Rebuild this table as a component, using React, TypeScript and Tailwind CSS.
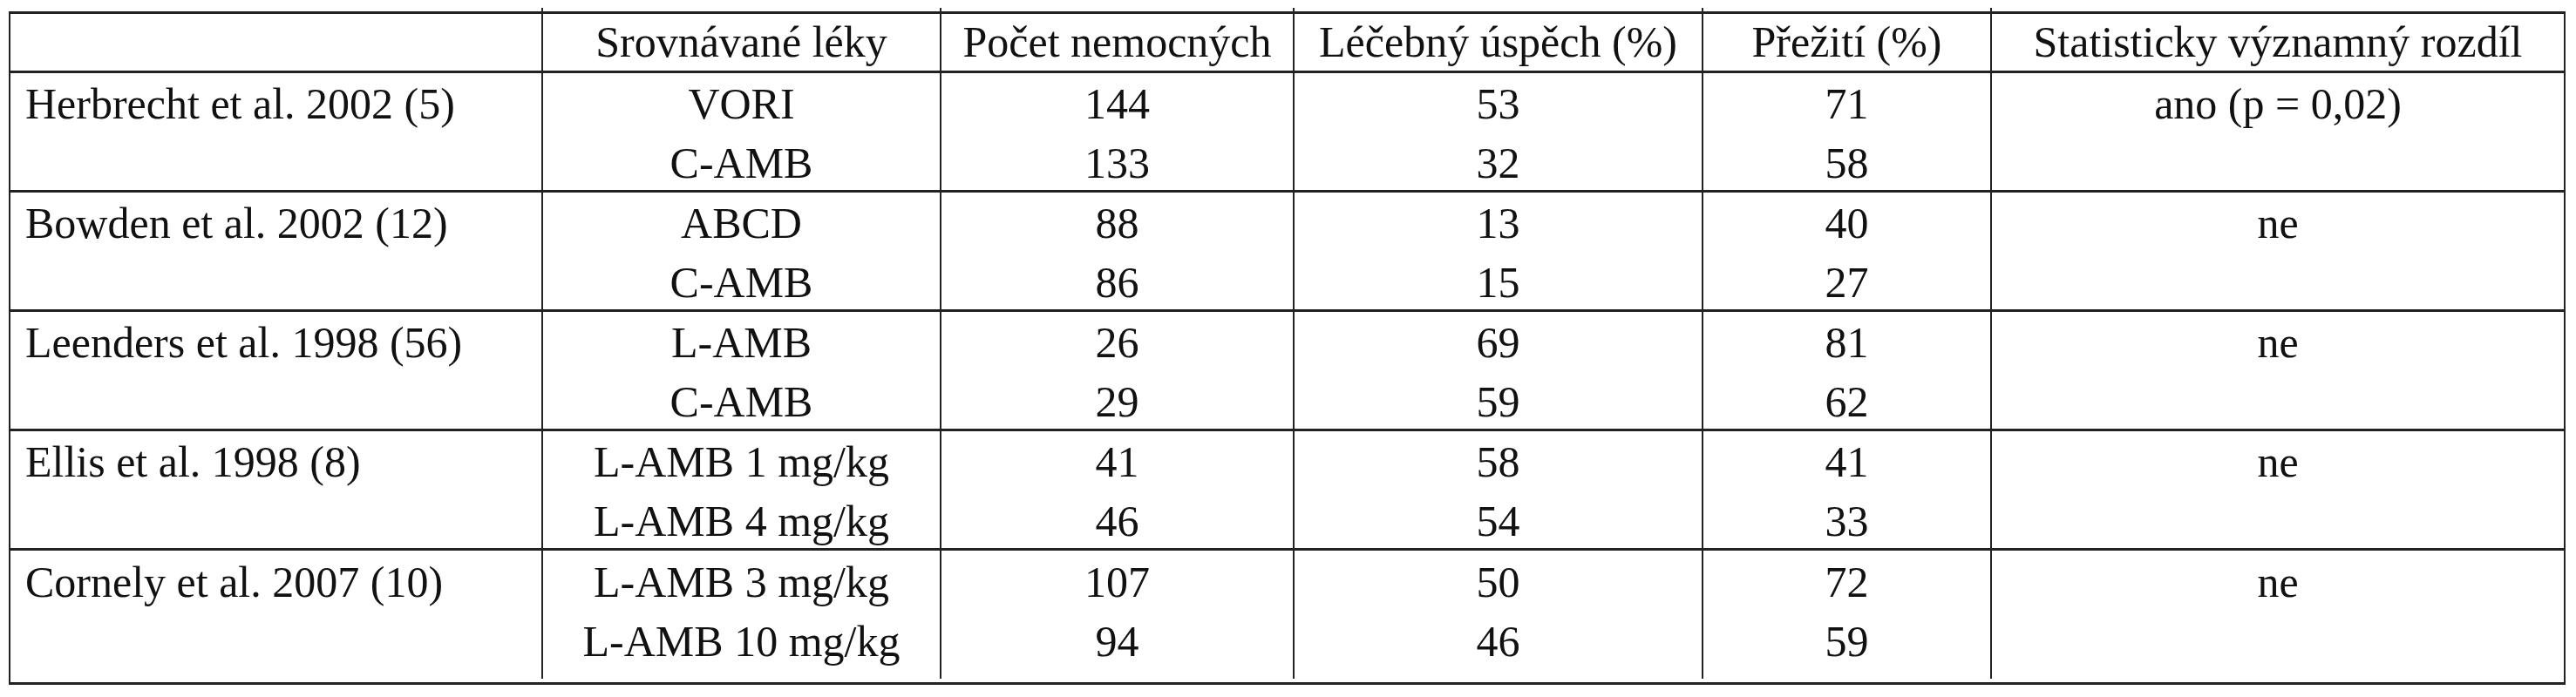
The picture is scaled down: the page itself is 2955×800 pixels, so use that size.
import React from "react";

type Group = { study: string; drugs: string[]; n: string[]; success: string[]; survival: string[]; diff: string };

const groups: Group[] = [
  { study: "Herbrecht et al. 2002 (5)", drugs: ["VORI", "C-AMB"], n: ["144", "133"], success: ["53", "32"], survival: ["71", "58"], diff: "ano (p = 0,02)" },
  { study: "Bowden et al. 2002 (12)", drugs: ["ABCD", "C-AMB"], n: ["88", "86"], success: ["13", "15"], survival: ["40", "27"], diff: "ne" },
  { study: "Leenders et al. 1998 (56)", drugs: ["L-AMB", "C-AMB"], n: ["26", "29"], success: ["69", "59"], survival: ["81", "62"], diff: "ne" },
  { study: "Ellis et al. 1998 (8)", drugs: ["L-AMB 1 mg/kg", "L-AMB 4 mg/kg"], n: ["41", "46"], success: ["58", "54"], survival: ["41", "33"], diff: "ne" },
  { study: "Cornely et al. 2007 (10)", drugs: ["L-AMB 3 mg/kg", "L-AMB 10 mg/kg"], n: ["107", "94"], success: ["50", "46"], survival: ["72", "59"], diff: "ne" },
];

const headers = ["Srovnávané léky", "Počet nemocných", "Léčebný úspěch (%)", "Přežití (%)", "Statisticky významný rozdíl"];

const gridCls = "grid grid-cols-[609px_457px_405px_469px_331px_658px]";
const cellCls = "border-l-2 border-[#222] text-center";

export default function App() {
  return (
    <div
      className="h-[800px] w-[2955px] bg-white pl-[10px] pt-[13px] text-[50px] leading-[68px] text-[#111]"
      style={{ fontFamily: '"Liberation Serif", "Times New Roman", serif' }}
    >
      <div className="w-[2933px] border-x-2 border-y-[3px] border-[#222] pb-[4px]">
        {/* hlavička */}
        <div className={`${gridCls} h-[68px] border-b-[3px] border-[#222] leading-[65px]`}>
          <div />
          {headers.map((h) => (
            <div key={h} className={`${cellCls} relative`}>
              <span className="absolute -left-[2px] -top-[7px] h-[7px] w-[2px] bg-[#222]" />
              {h}
            </div>
          ))}
        </div>

        {groups.map((g, i) => {
          const last = i === groups.length - 1;
          const pad = last ? "pt-[2px] pb-[9px]" : "pt-[1px]";
          return (
            <div key={g.study} className={`${gridCls} ${last ? "" : "h-[137px] border-b-[3px] border-[#222]"}`}>
              <div className={`pl-[17px] whitespace-nowrap ${pad}`}>{g.study}</div>
              {[g.drugs, g.n, g.success, g.survival].map((col, j) => (
                <div key={j} className={`${cellCls} ${pad}`}>
                  {col.map((v) => (
                    <div key={v} className="whitespace-nowrap">{v}</div>
                  ))}
                </div>
              ))}
              <div className={`${cellCls} ${pad} whitespace-nowrap`}>{g.diff}</div>
            </div>
          );
        })}
      </div>
    </div>
  );
}
